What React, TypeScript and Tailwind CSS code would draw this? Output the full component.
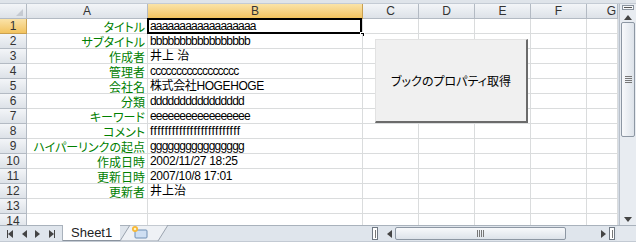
import React from 'react';

const rows: { label: string; value: string; track?: string }[] = [
    { label: 'タイトル', value: 'aaaaaaaaaaaaaaaaaa' },
    { label: 'サブタイトル', value: 'bbbbbbbbbbbbbbbbb' },
    { label: '作成者', value: '井上 治', track: 'tracking-[0px]' },
    { label: '管理者', value: 'ccccccccccccccccc' },
    { label: '会社名', value: '株式会社HOGEHOGE', track: 'tracking-[-0.4px]' },
    { label: '分類', value: 'dddddddddddddddd' },
    { label: 'キーワード', value: 'eeeeeeeeeeeeeeeee' },
    { label: 'コメント', value: 'fffffffffffffffffffffffff', track: 'tracking-[0.5px]' },
    { label: 'ハイパーリンクの起点', value: 'gggggggggggggggg' },
    { label: '作成日時', value: '2002/11/27 18:25', track: 'tracking-[-0.3px]' },
    { label: '更新日時', value: '2007/10/8 17:01', track: 'tracking-[-0.3px]' },
    { label: '更新者', value: '井上治', track: 'tracking-[0px]' },
    { label: '', value: '' },
    { label: '', value: '' },
];

const headFont = "font-['Liberation_Sans',sans-serif] text-[12px] leading-[13px] text-[#333]";
const headCell = `flex items-center justify-center border-r border-b border-[#b3bac3] bg-gradient-to-b from-[#f3f5f8] to-[#dde2e8] overflow-hidden ${headFont}`;
const selHead = `flex items-center justify-center border-r border-b border-[#c9a050] bg-gradient-to-b from-[#fae3a8] to-[#f2c35e] overflow-hidden ${headFont}`;
const cell = 'border-r border-b border-[#dadcdd] bg-white';

function Tri({ dir, className }: { dir: 'l' | 'r' | 'u' | 'd'; className?: string }) {
    const pts = {
        l: '5,0 0,4 5,8',
        r: '0,0 5,4 0,8',
        u: '0,5 4,0 8,5',
        d: '0,0 8,0 4,5',
    }[dir];
    const w = dir === 'l' || dir === 'r' ? 5 : 8;
    const h = dir === 'l' || dir === 'r' ? 8 : 5;
    return (
        <svg width={w} height={h} viewBox={`0 0 ${w} ${h}`} className={className}>
            <polygon points={pts} fill="#444" />
        </svg>
    );
}

function SheetGrid() {
    return (
        <div className="relative grid grid-cols-[27px_121px_215px_56px_56px_56px_56px_31px] auto-rows-[15px] overflow-hidden">
            {/* header row */}
            <div className={`${headCell} relative`}>
                <svg width="7" height="7" className="absolute right-[3px] bottom-[2px]">
                    <polygon points="7,0 7,7 0,7" fill="#c5cad1" />
                </svg>
            </div>
            <div className={headCell}>A</div>
            <div className={selHead}>B</div>
            <div className={headCell}>C</div>
            <div className={headCell}>D</div>
            <div className={headCell}>E</div>
            <div className={headCell}>F</div>
            <div className={`${headCell} justify-end pr-[1px]`}>G</div>

            {rows.map((r, i) => (
                <React.Fragment key={i}>
                    <div className={i === 0 ? selHead : headCell}>{i + 1}</div>
                    <div className={`${cell} flex items-center justify-end pr-[2px] text-[#008000] text-[12px] leading-[13px] whitespace-nowrap [font-feature-settings:'palt']`}>
                        {r.label}
                    </div>
                    <div
                        className={`${cell} relative flex items-center pl-[2px] font-['Liberation_Sans','Noto_Sans_CJK_JP',sans-serif] text-[12px] leading-[13px] text-black whitespace-nowrap ${
                            r.track ?? 'tracking-[-0.8px]'
                        }`}
                    >
                        {r.value}
                        {i === 0 && (
                            <>
                                <div className="absolute -left-[1px] -top-[1px] right-0 bottom-[-1px] border-2 border-black" />
                                <div className="absolute -right-[3px] -bottom-[4px] w-[5px] h-[5px] bg-black border border-white" />
                            </>
                        )}
                    </div>
                    <div className={cell} />
                    <div className={cell} />
                    <div className={cell} />
                    <div className={cell} />
                    <div className={cell} />
                </React.Fragment>
            ))}

            {/* form button over the sheet */}
            <div className="absolute left-[375px] top-[35px] w-[153px] h-[84px] flex items-center justify-center bg-[#f0f0f0] border border-[#e2e2e2] border-r-[2px] border-b-[2px] border-r-[#6b6b6b] border-b-[#6b6b6b] text-[12px] leading-[14px] text-black [font-feature-settings:'palt']">
                ブックのプロパティ取得
            </div>
        </div>
    );
}

function VScroll() {
    return (
        <div className="w-[17px] flex flex-col bg-[#e8ecf1] border-l border-[#b9c0c9]">
            <div className="h-[8px] flex items-start justify-center pt-[1px]">
                <div className="w-[12px] h-[5px] border border-[#8a939e] bg-[#f6f8fa] flex items-center justify-center">
                    <div className="w-[8px] h-[1px] bg-[#555]" />
                </div>
            </div>
            <div className="h-[10px] flex items-center justify-center">
                <Tri dir="u" />
            </div>
            <div className="mx-[1px] h-[115px] rounded-[2px] border border-[#8d97a3] bg-gradient-to-r from-[#f8f9fb] to-[#dde3ea] flex items-center justify-center">
                <div className="flex flex-col gap-[1px]">
                    <div className="w-[7px] h-[1px] bg-[#777]" />
                    <div className="w-[7px] h-[1px] bg-[#777]" />
                    <div className="w-[7px] h-[1px] bg-[#777]" />
                    <div className="w-[7px] h-[1px] bg-[#777]" />
                </div>
            </div>
            <div className="flex-1" />
            <div className="h-[12px] flex items-center justify-center">
                <Tri dir="d" />
            </div>
        </div>
    );
}

function TabBar() {
    return (
        <div className="h-[16px] flex bg-[#dfe5ec] border-t border-[#a9b2bc]">
            <div className="w-[63px] flex items-center justify-around px-[3px] border-r border-[#a9b2bc]">
                <div className="flex items-center">
                    <div className="w-[1px] h-[8px] bg-[#444]" />
                    <Tri dir="l" />
                </div>
                <Tri dir="l" />
                <Tri dir="r" />
                <div className="flex items-center">
                    <Tri dir="r" />
                    <div className="w-[1px] h-[8px] bg-[#444]" />
                </div>
            </div>
            <div className="relative w-[57px] -mt-[1px] bg-white border-b border-[#8a939e] flex items-center pl-[8px] text-[13px] text-[#222] font-['Liberation_Sans',sans-serif] leading-[14px]">
                Sheet1
            </div>
            <svg width="48" height="16" viewBox="0 0 48 16" className="shrink-0 -mt-[1px]">
                <polygon points="0,16 10,0 48,0 38,16" fill="#eef1f5" stroke="#9aa3ae" strokeWidth="1" />
                <rect x="15" y="5" width="12" height="8" rx="1" fill="#cfdff2" stroke="#6f8fb4" />
                <circle cx="15" cy="4" r="3" fill="#f7b733" />
                <circle cx="15" cy="4" r="1.3" fill="#fff3c4" />
            </svg>
            <div className="flex-1" />
            <div className="w-[6px] my-[1px] mr-[5px] border border-[#6f7882] bg-white flex items-center justify-center">
                <div className="w-[1px] h-[8px] bg-[#777]" />
            </div>
            <div className="w-[12px] flex items-center justify-center">
                <Tri dir="l" />
            </div>
            <div className="w-[171px] my-[1px] rounded-[2px] border border-[#8d97a3] bg-gradient-to-b from-[#f8f9fb] to-[#dde3ea] flex items-center justify-center gap-[1px]">
                <div className="w-[1px] h-[7px] bg-[#777]" />
                <div className="w-[1px] h-[7px] bg-[#777]" />
                <div className="w-[1px] h-[7px] bg-[#777]" />
                <div className="w-[1px] h-[7px] bg-[#777]" />
            </div>
            <div className="w-[31px]" />
            <div className="w-[12px] flex items-center justify-center">
                <Tri dir="r" />
            </div>
            <div className="w-[6px] my-[1px] border border-[#6f7882] bg-white flex items-center justify-center">
                <div className="w-[1px] h-[8px] bg-[#777]" />
            </div>
            <div className="w-[19px] ml-[2px] bg-[#e3e8ee]" />
        </div>
    );
}

export default function App() {
    return (
        <div className="w-[636px] h-[242px] overflow-hidden flex flex-col bg-[#d5dce5] leading-[14px] font-['Noto_Sans_CJK_JP','Liberation_Sans',sans-serif]">
            <div className="h-[4px] bg-[#dfe4ea] border-b border-[#c4cbd4]" />
            <div className="h-[221px] flex overflow-hidden">
                <div className="flex-1 overflow-hidden">
                    <SheetGrid />
                </div>
                <VScroll />
            </div>
            <TabBar />
            <div className="flex-1 bg-[#c3cad3]" />
        </div>
    );
}
